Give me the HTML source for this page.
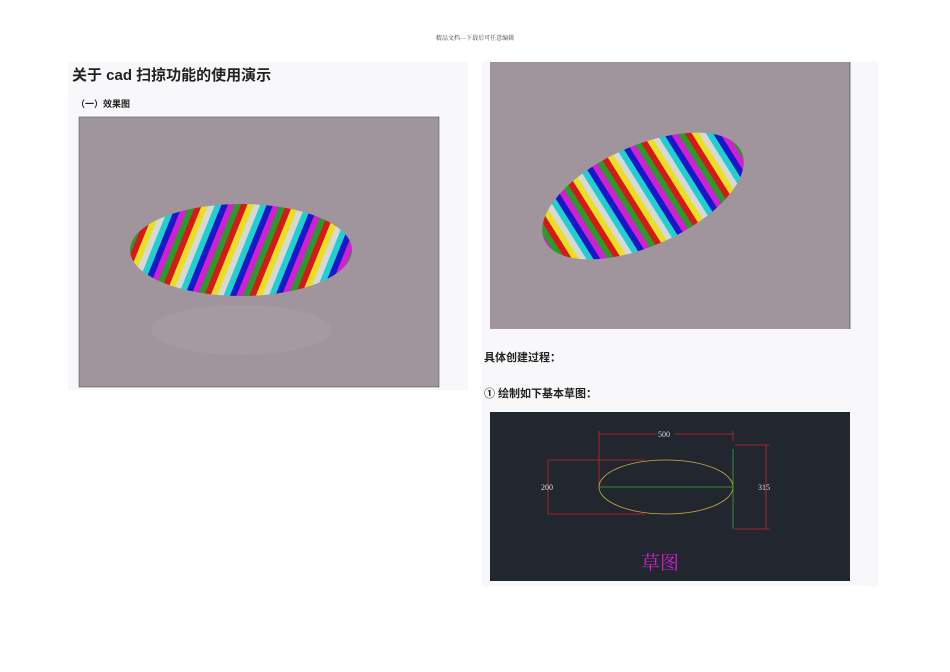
<!DOCTYPE html>
<html><head><meta charset="utf-8"><style>
body{margin:0;width:950px;height:672px;background:#fff;position:relative;overflow:hidden;font-family:"Liberation Sans","Noto Sans CJK SC",sans-serif}
.a{position:absolute}
</style></head><body>
<div class="a" style="left:0;top:33px;width:950px;text-align:center;font-size:6px;color:#444;font-family:'Noto Serif CJK SC',serif">精品文档---下载后可任意编辑</div>
<div class="a" style="left:68px;top:62px;width:400px;height:328px;background:#f8f8fa"></div>
<div class="a" style="left:482px;top:62px;width:396px;height:524px;background:#f8f8fa"></div>
<div class="a" style="left:72px;top:64px;font-size:15px;font-weight:bold;color:#222">关于 cad 扫掠功能的使用演示</div>
<div class="a" style="left:76px;top:97px;font-size:9px;font-weight:bold;color:#222">（一）效果图</div>
<div class="a" style="left:484px;top:349px;font-size:11px;font-weight:bold;color:#222">具体创建过程：</div>
<div class="a" style="left:484px;top:385px;font-size:11px;font-weight:bold;color:#222">① 绘制如下基本草图：</div>
<svg class="a" style="left:0;top:0" width="950" height="672">
<defs>
<pattern id="st" width="42" height="42" patternUnits="userSpaceOnUse" patternTransform="rotate(22)">
<rect x="0" width="6" height="42" fill="#2a9a2a"/><rect x="6" width="6" height="42" fill="#d81818"/><rect x="12" width="6" height="42" fill="#e8e020"/><rect x="18" width="6" height="42" fill="#d8d8d8"/><rect x="24" width="6" height="42" fill="#20d0d0"/><rect x="30" width="6" height="42" fill="#1818c8"/><rect x="36" width="6" height="42" fill="#d020d0"/>
</pattern>
<pattern id="st2" width="42" height="42" patternUnits="userSpaceOnUse" patternTransform="rotate(-8)">
<rect x="0" width="6" height="42" fill="#2a9a2a"/><rect x="6" width="6" height="42" fill="#d81818"/><rect x="12" width="6" height="42" fill="#e8e020"/><rect x="18" width="6" height="42" fill="#d8d8d8"/><rect x="24" width="6" height="42" fill="#20d0d0"/><rect x="30" width="6" height="42" fill="#1818c8"/><rect x="36" width="6" height="42" fill="#d020d0"/>
</pattern>
</defs>
<rect x="79" y="117" width="360" height="270" fill="#a0959c" stroke="#555" stroke-width="0.6"/>
<ellipse cx="241" cy="330" rx="90" ry="25" fill="#a8a0a6" opacity="0.5"/>
<ellipse cx="241" cy="250" rx="111" ry="46" fill="url(#st)"/>
<rect x="490" y="62" width="360" height="267" fill="#a0959c"/>
<line x1="850" y1="62" x2="850" y2="329" stroke="#555" stroke-width="0.8"/>
<ellipse cx="643" cy="196" rx="108" ry="50" transform="rotate(-24 643 196)" fill="url(#st2)"/>
<rect x="490" y="412" width="360" height="169" fill="#22262f"/>
<g fill="none" stroke-width="0.8">
<path d="M599 431V487M733 431V441M599 434H733M548 460H645M548 514H645M548 460V514M735 445H770M735 529H770M766 445V529" stroke="#c82828"/>
<ellipse cx="666" cy="487" rx="67" ry="27" stroke="#c8b040"/>
<path d="M599 487H733M733 449V529" stroke="#30b030"/>
</g>
<g fill="#ddd" font-size="8" font-family="Liberation Serif,serif">
<rect x="657" y="428" width="18" height="10" fill="#22262f"/>
<text x="658" y="437">500</text><text x="541" y="490">200</text><text x="758" y="490">315</text>
</g>
<text x="641" y="569" fill="#d020d0" font-size="19" font-family="Noto Serif CJK SC,serif">草图</text>
</svg>
</body></html>
